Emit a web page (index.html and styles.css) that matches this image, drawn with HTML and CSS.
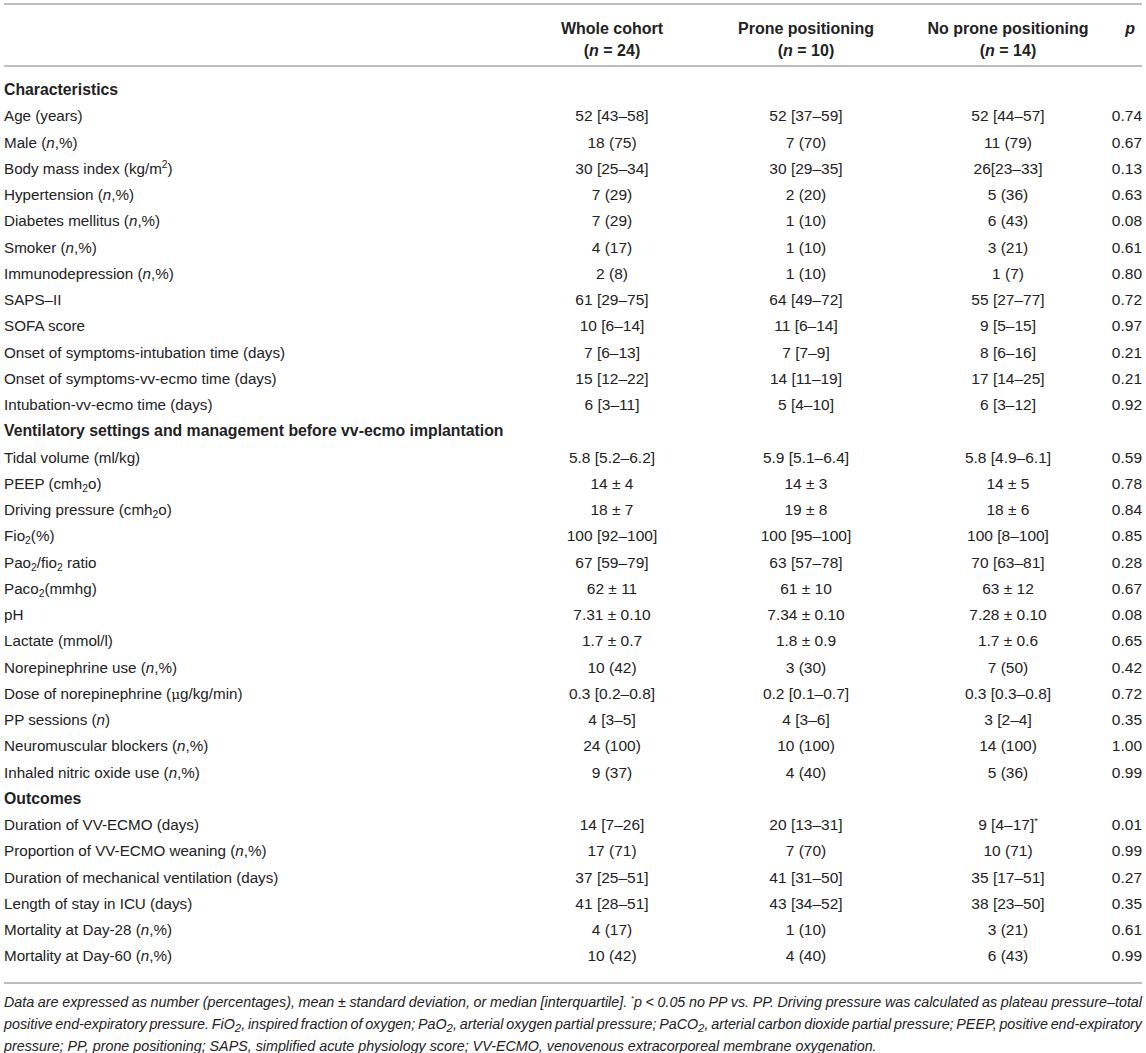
FILE: index.html
```html
<!DOCTYPE html>
<html>
<head>
<meta charset="utf-8">
<link rel="stylesheet" href="styles.css">
</head>
<body>
<div class="wrap">
<table class="tbl">
<colgroup>
<col class="c-label"><col class="c-whole"><col class="c-prone"><col class="c-noprone"><col class="c-p">
</colgroup>
<thead>
<tr>
<th></th>
<th>Whole cohort<br>(<i>n</i> = 24)</th>
<th>Prone positioning<br>(<i>n</i> = 10)</th>
<th>No prone positioning<br>(<i>n</i> = 14)</th>
<th class="hp"><i>p</i></th>
</tr>
</thead>
<tbody>
<tr class="sec first"><td colspan="5">Characteristics</td></tr>
<tr><td>Age (years)</td><td>52 [43–58]</td><td>52 [37–59]</td><td>52 [44–57]</td><td>0.74</td></tr>
<tr><td>Male (<i>n</i>,%)</td><td>18 (75)</td><td>7 (70)</td><td>11 (79)</td><td>0.67</td></tr>
<tr><td>Body mass index (kg/m<sup>2</sup>)</td><td>30 [25–34]</td><td>30 [29–35]</td><td>26[23–33]</td><td>0.13</td></tr>
<tr><td>Hypertension (<i>n</i>,%)</td><td>7 (29)</td><td>2 (20)</td><td>5 (36)</td><td>0.63</td></tr>
<tr><td>Diabetes mellitus (<i>n</i>,%)</td><td>7 (29)</td><td>1 (10)</td><td>6 (43)</td><td>0.08</td></tr>
<tr><td>Smoker (<i>n</i>,%)</td><td>4 (17)</td><td>1 (10)</td><td>3 (21)</td><td>0.61</td></tr>
<tr><td>Immunodepression (<i>n</i>,%)</td><td>2 (8)</td><td>1 (10)</td><td>1 (7)</td><td>0.80</td></tr>
<tr><td>SAPS–II</td><td>61 [29–75]</td><td>64 [49–72]</td><td>55 [27–77]</td><td>0.72</td></tr>
<tr><td>SOFA score</td><td>10 [6–14]</td><td>11 [6–14]</td><td>9 [5–15]</td><td>0.97</td></tr>
<tr><td>Onset of symptoms-intubation time (days)</td><td>7 [6–13]</td><td>7 [7–9]</td><td>8 [6–16]</td><td>0.21</td></tr>
<tr><td>Onset of symptoms-vv-ecmo time (days)</td><td>15 [12–22]</td><td>14 [11–19]</td><td>17 [14–25]</td><td>0.21</td></tr>
<tr><td>Intubation-vv-ecmo time (days)</td><td>6 [3–11]</td><td>5 [4–10]</td><td>6 [3–12]</td><td>0.92</td></tr>
<tr class="sec"><td colspan="5">Ventilatory settings and management before vv-ecmo implantation</td></tr>
<tr><td>Tidal volume (ml/kg)</td><td>5.8 [5.2–6.2]</td><td>5.9 [5.1–6.4]</td><td>5.8 [4.9–6.1]</td><td>0.59</td></tr>
<tr><td>PEEP (cmh<sub>2</sub>o)</td><td>14 ± 4</td><td>14 ± 3</td><td>14 ± 5</td><td>0.78</td></tr>
<tr><td>Driving pressure (cmh<sub>2</sub>o)</td><td>18 ± 7</td><td>19 ± 8</td><td>18 ± 6</td><td>0.84</td></tr>
<tr><td>Fio<sub>2</sub>(%)</td><td>100 [92–100]</td><td>100 [95–100]</td><td>100 [8–100]</td><td>0.85</td></tr>
<tr><td>Pao<sub>2</sub>/fio<sub>2</sub> ratio</td><td>67 [59–79]</td><td>63 [57–78]</td><td>70 [63–81]</td><td>0.28</td></tr>
<tr><td>Paco<sub>2</sub>(mmhg)</td><td>62 ± 11</td><td>61 ± 10</td><td>63 ± 12</td><td>0.67</td></tr>
<tr><td>pH</td><td>7.31 ± 0.10</td><td>7.34 ± 0.10</td><td>7.28 ± 0.10</td><td>0.08</td></tr>
<tr><td>Lactate (mmol/l)</td><td>1.7 ± 0.7</td><td>1.8 ± 0.9</td><td>1.7 ± 0.6</td><td>0.65</td></tr>
<tr><td>Norepinephrine use (<i>n</i>,%)</td><td>10 (42)</td><td>3 (30)</td><td>7 (50)</td><td>0.42</td></tr>
<tr><td>Dose of norepinephrine (<span class="mu">μ</span>g/kg/min)</td><td>0.3 [0.2–0.8]</td><td>0.2 [0.1–0.7]</td><td>0.3 [0.3–0.8]</td><td>0.72</td></tr>
<tr><td>PP sessions (<i>n</i>)</td><td>4 [3–5]</td><td>4 [3–6]</td><td>3 [2–4]</td><td>0.35</td></tr>
<tr><td>Neuromuscular blockers (<i>n</i>,%)</td><td>24 (100)</td><td>10 (100)</td><td>14 (100)</td><td>1.00</td></tr>
<tr><td>Inhaled nitric oxide use (<i>n</i>,%)</td><td>9 (37)</td><td>4 (40)</td><td>5 (36)</td><td>0.99</td></tr>
<tr class="sec"><td colspan="5">Outcomes</td></tr>
<tr><td>Duration of VV-ECMO (days)</td><td>14 [7–26]</td><td>20 [13–31]</td><td>9 [4–17]<sup class="ast">*</sup></td><td>0.01</td></tr>
<tr><td>Proportion of VV-ECMO weaning (<i>n</i>,%)</td><td>17 (71)</td><td>7 (70)</td><td>10 (71)</td><td>0.99</td></tr>
<tr><td>Duration of mechanical ventilation (days)</td><td>37 [25–51]</td><td>41 [31–50]</td><td>35 [17–51]</td><td>0.27</td></tr>
<tr><td>Length of stay in ICU (days)</td><td>41 [28–51]</td><td>43 [34–52]</td><td>38 [23–50]</td><td>0.35</td></tr>
<tr><td>Mortality at Day-28 (<i>n</i>,%)</td><td>4 (17)</td><td>1 (10)</td><td>3 (21)</td><td>0.61</td></tr>
<tr class="last"><td>Mortality at Day-60 (<i>n</i>,%)</td><td>10 (42)</td><td>4 (40)</td><td>6 (43)</td><td>0.99</td></tr>
</tbody>
</table>
<p class="note"><span class="ln">Data are expressed as number (percentages), mean ± standard deviation, or median [interquartile]. <sup class="ast">*</sup>p &lt; 0.05 no PP vs. PP. Driving pressure was calculated as plateau pressure–total</span><span class="ln">positive end-expiratory pressure. FiO<sub>2</sub>, inspired fraction of oxygen; PaO<sub>2</sub>, arterial oxygen partial pressure; PaCO<sub>2</sub>, arterial carbon dioxide partial pressure; PEEP, positive end-expiratory</span><span class="ln end">pressure; PP, prone positioning; SAPS, simplified acute physiology score; VV-ECMO, venovenous extracorporeal membrane oxygenation.</span></p>
</div>
</body>
</html>
```
FILE: styles.css
```css
html, body {
  margin: 0;
  padding: 0;
  background: #fff;
}
body {
  font-family: "Liberation Sans", Arial, Helvetica, sans-serif;
  color: #222;
}
.wrap {
  padding: 3px 4px 0 4px;
  width: 1138px;
}
.tbl {
  width: 1138px;
  border-collapse: collapse;
  table-layout: fixed;
  font-size: 15.5px;
}
.c-label { width: 514px; }
.c-whole { width: 188px; }
.c-prone { width: 200px; }
.c-noprone { width: 204px; }
.c-p { width: 32px; }
.tbl thead th {
  font-size: 16px;
  font-weight: bold;
  text-align: center;
  vertical-align: top;
  line-height: 22px;
  padding: 13px 0 3px 0;
  border-top: 2px solid #bcbcbc;
  border-bottom: 2px solid #bcbcbc;
}
.tbl thead th.hp {
  text-align: right;
  padding-right: 7px;
}
.tbl td {
  padding: 0;
  height: 26.25px;
  line-height: 18px;
  text-align: center;
  vertical-align: middle;
  white-space: nowrap;
}
.tbl td:first-child {
  text-align: left;
  font-size: 15.2px;
}
.tbl td:last-child {
  text-align: right;
}
.tbl tr.sec td {
  font-weight: bold;
  text-align: left;
  font-size: 15.8px;
}
.tbl tr.first td {
  padding-top: 10px;
}
.tbl tr.last td {
  padding-bottom: 12px;
  border-bottom: 2px solid #bcbcbc;
}
.tbl sub, .tbl sup {
  font-size: 0.68em;
  line-height: 0;
}
.tbl sub { vertical-align: -3px; }
.tbl sup { vertical-align: 6px; }
.tbl .ast {
  font-size: 0.6em;
}
.mu {
  font-family: "DejaVu Serif", "Liberation Serif", serif;
  font-size: 0.9em;
}
.note {
  margin: 7px 0 0 0;
  font-size: 14.3px;
  font-style: italic;
  line-height: 22px;
}
.note .ln {
  display: block;
  height: 22px;
  text-align: justify;
  text-align-last: justify;
  word-spacing: -4px;
}
.note .ln.end {
  text-align: left;
  text-align-last: left;
  word-spacing: normal;
}
.note sub {
  font-size: 0.8em;
  line-height: 0;
  vertical-align: -3px;
}
.note sup {
  font-size: 0.55em;
  line-height: 0;
  vertical-align: 6px;
}
```
